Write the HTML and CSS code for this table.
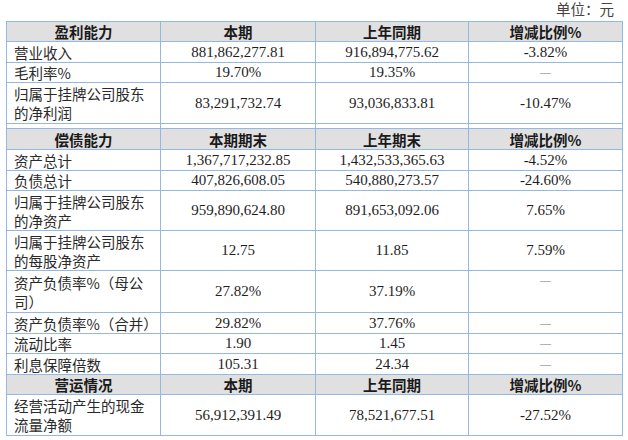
FILE: index.html
```html
<!DOCTYPE html>
<html lang="zh">
<head>
<meta charset="utf-8">
<link rel="stylesheet" href="styles.css">
</head>
<body>
<div class="page">
  <div class="unit">单位：元</div>
  <table class="fin">
    <colgroup><col class="c1"><col class="c2"><col class="c3"><col class="c4"></colgroup>
    <tr class="head h20"><th>盈利能力</th><th>本期</th><th>上年同期</th><th>增减比例%</th></tr>
    <tr class="h21"><td class="lbl">营业收入</td><td>881,862,277.81</td><td>916,894,775.62</td><td>-3.82%</td></tr>
    <tr class="h20"><td class="lbl">毛利率%</td><td>19.70%</td><td>19.35%</td><td class="dash">－</td></tr>
    <tr class="h41"><td class="lbl">归属于挂牌公司股东<br>的净利润</td><td>83,291,732.74</td><td>93,036,833.81</td><td>-10.47%</td></tr>
    <tr class="gap"><td></td><td></td><td></td><td></td></tr>
    <tr class="head h21"><th>偿债能力</th><th>本期期末</th><th>上年期末</th><th>增减比例%</th></tr>
    <tr class="h21"><td class="lbl">资产总计</td><td>1,367,717,232.85</td><td>1,432,533,365.63</td><td>-4.52%</td></tr>
    <tr class="h20"><td class="lbl">负债总计</td><td>407,826,608.05</td><td>540,880,273.57</td><td>-24.60%</td></tr>
    <tr class="h40"><td class="lbl">归属于挂牌公司股东<br>的净资产</td><td>959,890,624.80</td><td>891,653,092.06</td><td>7.65%</td></tr>
    <tr class="h40"><td class="lbl">归属于挂牌公司股东<br>的每股净资产</td><td>12.75</td><td>11.85</td><td>7.59%</td></tr>
    <tr class="h42"><td class="lbl">资产负债率%（母公<br>司）</td><td>27.82%</td><td>37.19%</td><td class="dash top">－</td></tr>
    <tr class="h21"><td class="lbl">资产负债率%（合并）</td><td>29.82%</td><td>37.76%</td><td class="dash">－</td></tr>
    <tr class="h20"><td class="lbl">流动比率</td><td>1.90</td><td>1.45</td><td class="dash">－</td></tr>
    <tr class="h21"><td class="lbl">利息保障倍数</td><td>105.31</td><td>24.34</td><td class="dash">－</td></tr>
    <tr class="head h19"><th>营运情况</th><th>本期</th><th>上年同期</th><th>增减比例%</th></tr>
    <tr class="h41"><td class="lbl">经营活动产生的现金<br>流量净额</td><td>56,912,391.49</td><td>78,521,677.51</td><td>-27.52%</td></tr>
  </table>
</div>
</body>
</html>
```

FILE: styles.css
```css
html, body {
  margin: 0;
  padding: 0;
  background: #ffffff;
}
.page {
  width: 628px;
  font-family: "Liberation Serif", "Noto Sans CJK SC", serif;
  color: #1e1e1e;
}
.unit {
  height: 21px;
  line-height: 21px;
  text-align: right;
  padding-right: 14px;
  font-size: 14.5px;
  color: #444;
}
.fin {
  margin-left: 6px;
  width: 616px;
  border-collapse: collapse;
  table-layout: fixed;
}
.c1 { width: 154px; }
.c2 { width: 155px; }
.c3 { width: 153px; }
.c4 { width: 154px; }
.fin th, .fin td {
  border: 1px solid #93b8e2;
  padding: 0;
  font-size: 15px;
  line-height: 19px;
  text-align: center;
  vertical-align: middle;
  white-space: nowrap;
}
.fin th {
  background: #e0e0e0;
  font-family: "Noto Sans CJK SC", "Liberation Sans", sans-serif;
  font-weight: 700;
  font-size: 14.5px;
  color: #1a1a1a;
}
.fin td.lbl {
  text-align: left;
  padding-left: 7px;
  font-family: "Noto Sans CJK SC", sans-serif;
  font-size: 14.5px;
  color: #2a2a2a;
}
.fin td.dash {
  color: #a0a0a0;
  font-family: "Noto Sans CJK SC", sans-serif;
  font-size: 15px;
  font-weight: 300;
}
.fin td.top {
  vertical-align: top;
  padding-top: 0;
}
.h19 { height: 19px; }
.h20 { height: 20px; }
.h21 { height: 21px; }
.h40 { height: 40px; }
.h41 { height: 41px; }
.h42 { height: 42px; }
.gap td { height: 4px; line-height: 4px; font-size: 0; }
```
